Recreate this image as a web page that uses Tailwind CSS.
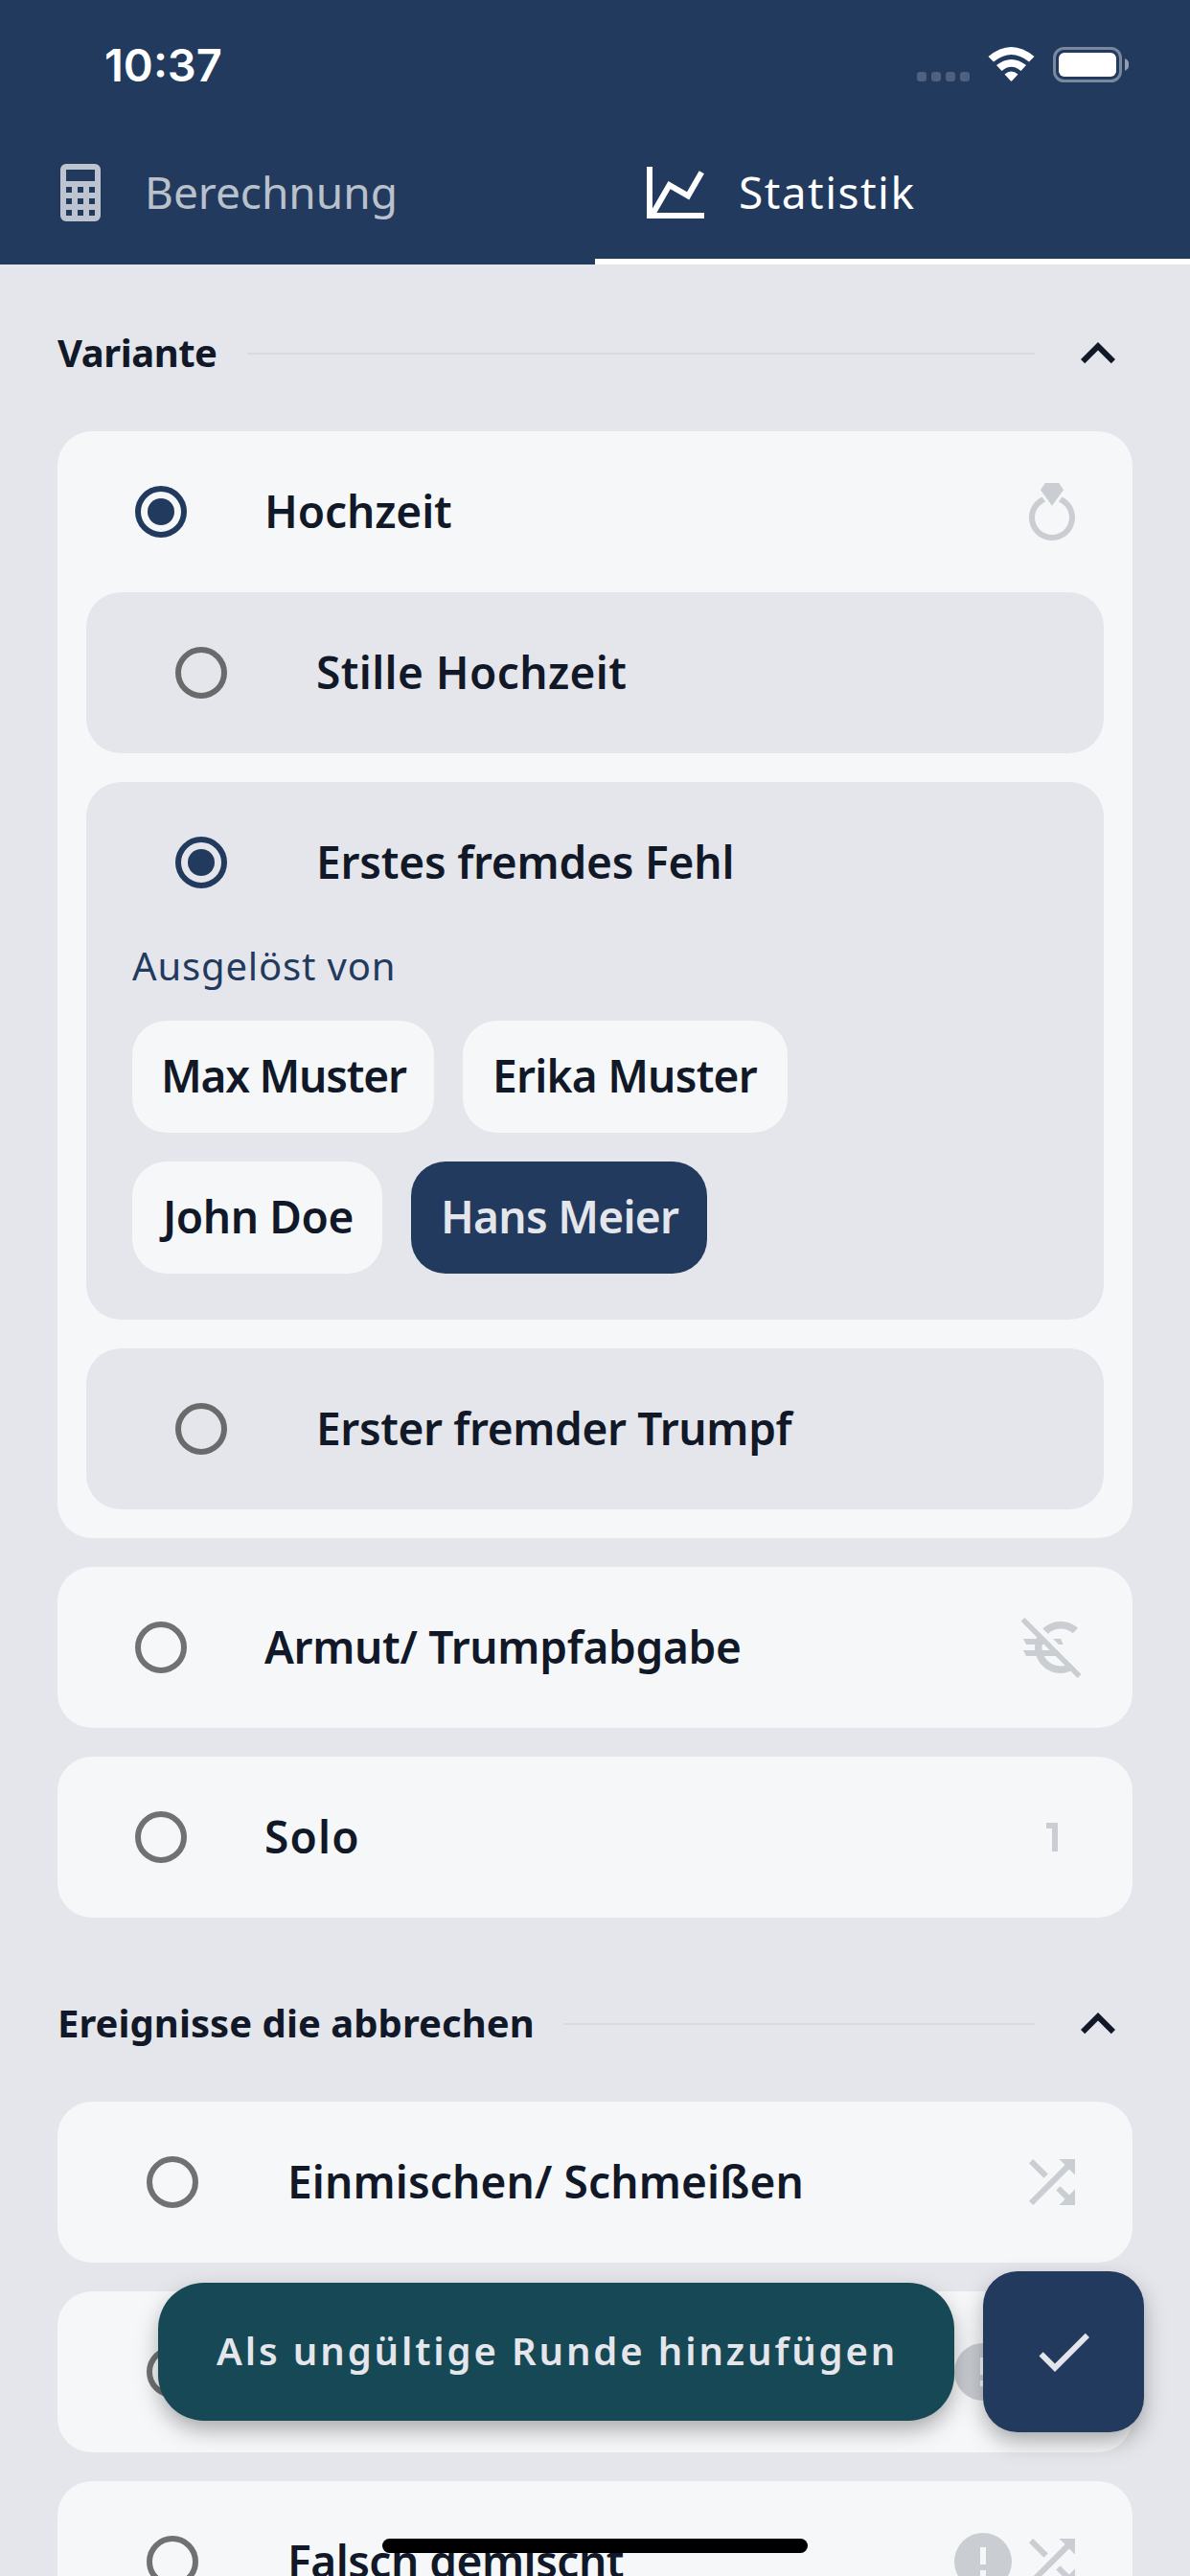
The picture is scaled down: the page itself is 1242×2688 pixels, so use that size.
<!DOCTYPE html>
<html lang="de">
<head>
<meta charset="utf-8">
<title>Statistik</title>
<script src="https://cdn.jsdelivr.net/npm/@tailwindcss/browser@4"></script>
</head>
<body class="bg-[#e5e6eb]">
<div class="relative w-[1242px] h-[2688px] overflow-hidden bg-[#e5e6eb] text-[#111827] whitespace-nowrap font-['Noto_Sans',sans-serif]">

  <header class="h-[276px] bg-[#223a5e] text-white flex flex-col">
    <!-- status bar -->
    <div class="h-[132px] flex items-center justify-between pl-[109px] pr-[64px] pt-[3px]">
      <span class="font-['Inter',sans-serif] font-semibold text-[47px] leading-none">10:37</span>
      <svg class="w-[221px] h-[37px]" viewBox="957 49 221 37">
        <g fill="#fff" fill-opacity=".2"><rect x="957" y="75" width="10" height="10" rx="3"/><rect x="972" y="75" width="10" height="10" rx="3"/><rect x="987" y="75" width="10" height="10" rx="3"/><rect x="1002" y="75" width="10" height="10" rx="3"/></g>
        <g fill="#fff">
          <path d="M1031.500 59Q1055.500 39 1079.500 59L1074 64.500Q1055.500 49.500 1037 64.500Z"/>
          <path d="M1040 68Q1055.500 56 1071 68L1065.500 74Q1055.500 65.500 1045.500 74Z"/>
          <path d="M1048.500 77.500Q1055.500 71.500 1062.500 77.500L1056.300 84.300Q1055.500 85.200 1054.700 84.300Z"/>
          <rect x="1105" y="55" width="60" height="25" rx="6"/>
        </g>
        <rect x="1100.500" y="50.500" width="69" height="34" rx="10" fill="none" stroke="#fff" stroke-opacity=".4" stroke-width="3"/>
        <path d="M1174 61a7 7 0 0 1 0 13z" fill="#fff" fill-opacity=".5"/>
      </svg>
    </div>
    <nav class="flex-1 grid grid-cols-2 text-[46px] leading-none">
      <div class="flex items-center pl-12 gap-[31px] pb-[6px] text-white/70">
        <svg class="size-[72px]" viewBox="0 0 24 24" fill="currentColor"><path d="M7 2H17A2 2 0 0 1 19 4V20A2 2 0 0 1 17 22H7A2 2 0 0 1 5 20V4A2 2 0 0 1 7 2M7 4V8H17V4H7M7 10V12H9V10H7M11 10V12H13V10H11M15 10V12H17V10H15M7 14V16H9V14H7M11 14V16H13V14H11M15 14V16H17V14H15M7 18V20H9V18H7M11 18V20H13V18H11M15 18V20H17V18H15Z"/></svg>
        <span class="pb-[2px]">Berechnung</span>
      </div>
      <div class="flex items-center pl-12 gap-[30px] border-b-[6px] border-white">
        <svg class="size-[72px]" viewBox="0 0 24 24" fill="currentColor"><path d="M16 11.780L20.240 4.450L21.970 5.450L16.740 14.500L10.230 10.750L5.460 19H22V21H2V3H4V17.540L9.500 8L16 11.780Z"/></svg>
        <span class="pb-[2px] tracking-[1.47px]">Statistik</span>
      </div>
    </nav>
  </header>

  <main class="px-[60px]">
    <div class="h-[174px] pt-[12px] flex items-center">
      <h2 class="font-bold text-[40px] leading-none pb-[3px] tracking-[-0.46px]">Variante</h2>
      <div class="flex-1 h-[2px] bg-[#d9dade] ml-[31px] mr-[30px]"></div>
      <svg class="size-[72px]" viewBox="0 0 24 24" fill="currentColor"><path d="M7.410 15.410L12 10.830L16.590 15.410L18 14L12 8L6 14L7.410 15.410Z"/></svg>
    </div>

    <div class="flex flex-col gap-[30px] font-semibold text-[46px] leading-none">
      <section class="rounded-[36px] bg-[#f6f7f9] pb-[30px]">
        <div class="h-[168px] flex items-center pl-[81px] pr-12">
          <span class="size-[54px] shrink-0 rounded-full border-[6px] border-[#223a5e] flex items-center justify-center"><i class="size-[28px] rounded-full bg-[#223a5e]"></i></span>
          <span class="ml-[81px] pb-[2px] tracking-[-0.1px]">Hochzeit</span>
          <svg class="size-[72px] ml-auto text-[#cacdd2]" viewBox="0 0 24 24" fill="currentColor"><path d="M12 9.900L8 4.400L9.600 2H14.400L16 4.400L12 9.900M15.500 6.800L14.300 8.500C16.500 9.400 18 11.500 18 14C18 17.300 15.300 20 12 20S6 17.300 6 14C6 11.500 7.600 9.400 9.700 8.500L8.500 6.800C5.800 8.100 4 10.800 4 14C4 18.400 7.600 22 12 22S20 18.400 20 14C20 10.800 18.200 8.100 15.500 6.800Z"/></svg>
        </div>
        <div class="mx-[30px] flex flex-col gap-[30px]">
          <div class="h-[168px] rounded-[36px] bg-[#e5e6eb] flex items-center pl-[93px]">
            <span class="size-[54px] shrink-0 rounded-full border-[6px] border-[#6a6a6d]"></span>
            <span class="ml-[93px] pb-[2px] tracking-[0.4px]">Stille Hochzeit</span>
          </div>
          <div class="h-[561px] rounded-[36px] bg-[#e5e6eb]">
            <div class="h-[168px] flex items-center pl-[93px]">
              <span class="size-[54px] shrink-0 rounded-full border-[6px] border-[#223a5e] flex items-center justify-center"><i class="size-[28px] rounded-full bg-[#223a5e]"></i></span>
              <span class="ml-[93px] pb-[2px] tracking-[-0.2px]">Erstes fremdes Fehl</span>
            </div>
            <div class="px-12 flex flex-col">
              <p class="h-[81px] text-[40px] leading-[48px] text-[#223a5e] font-normal tracking-[0.85px]">Ausgelöst von</p>
              <div class="flex gap-[30px]">
                <span class="h-[117px] w-[315px] rounded-[36px] bg-[#f6f7f9] flex items-center pl-[30px] pb-[3px] tracking-[-1.2px]">Max Muster</span>
                <span class="h-[117px] w-[339px] rounded-[36px] bg-[#f6f7f9] flex items-center pl-[31px] pb-[3px] tracking-[-0.74px]">Erika Muster</span>
              </div>
              <div class="flex gap-[30px] mt-[30px]">
                <span class="h-[117px] w-[261px] rounded-[36px] bg-[#f6f7f9] flex items-center pl-[32px] pb-[3px] tracking-[-0.4px]">John Doe</span>
                <span class="h-[117px] w-[309px] rounded-[36px] bg-[#223a5e] text-[#e5e6eb] flex items-center pl-[31px] pb-[3px] tracking-[-0.7px]">Hans Meier</span>
              </div>
            </div>
          </div>
          <div class="h-[168px] rounded-[36px] bg-[#e5e6eb] flex items-center pl-[93px]">
            <span class="size-[54px] shrink-0 rounded-full border-[6px] border-[#6a6a6d]"></span>
            <span class="ml-[93px] pb-[2px] tracking-[-0.36px]">Erster fremder Trumpf</span>
          </div>
        </div>
      </section>

      <section class="h-[168px] rounded-[36px] bg-[#f6f7f9] flex items-center pl-[81px] pr-12">
        <span class="size-[54px] shrink-0 rounded-full border-[6px] border-[#717173]"></span>
        <span class="ml-[81px] pb-[2px] tracking-[-0.32px]">Armut/ Trumpfabgabe</span>
        <svg class="size-[72px] ml-auto text-[#cacdd2]" viewBox="0 0 24 24" fill="currentColor">
          <clipPath id="gap"><path d="M-2 -2.650L26 25.350V30H-2ZM0.700 -2.600H26V22.700Z"/></clipPath>
          <path clip-path="url(#gap)" d="M15 18.500C12.490 18.500 10.320 17.080 9.240 15H15V13H8.580C8.530 12.670 8.500 12.340 8.500 12S8.530 11.330 8.580 11H15.900L15 9H9.240C10.320 6.920 12.500 5.500 15 5.500C16.610 5.500 18.090 6.090 19.230 7.070L21 5.300C19.410 3.870 17.300 3 15 3C11.080 3 7.760 5.510 6.520 9H2L3 11H6.060A8.300 8.300 0 0 0 6.060 13H2L3 15H6.520C7.760 18.490 11.080 21 15 21C17.310 21 19.410 20.130 21 18.700L19.220 16.930C18.090 17.910 16.620 18.500 15 18.500Z"/>
          <path d="M2.500 1.700L1.200 2.950L20.900 22.650L22.150 21.350Z"/>
        </svg>
      </section>

      <section class="h-[168px] rounded-[36px] bg-[#f6f7f9] flex items-center pl-[81px] pr-12">
        <span class="size-[54px] shrink-0 rounded-full border-[6px] border-[#717173]"></span>
        <span class="ml-[81px] pb-[2px] tracking-[1.2px]">Solo</span>
        <svg class="size-[72px] ml-auto text-[#cacdd2]" viewBox="0 0 24 24" fill="currentColor"><path d="M14 17H12V9H10V7H14V17Z"/></svg>
      </section>
    </div>

    <div class="h-[192px] pt-[30px] flex items-center">
      <h2 class="font-bold text-[40px] leading-none pb-[3px] tracking-[0.05px]">Ereignisse die abbrechen</h2>
      <div class="flex-1 h-[2px] bg-[#d9dade] ml-[30px] mr-[30px]"></div>
      <svg class="size-[72px]" viewBox="0 0 24 24" fill="currentColor"><path d="M7.410 15.410L12 10.830L16.590 15.410L18 14L12 8L6 14L7.410 15.410Z"/></svg>
    </div>

    <div class="flex flex-col gap-[30px] font-semibold text-[46px] leading-none">
      <section class="h-[168px] rounded-[36px] bg-[#f6f7f9] flex items-center pl-[93px] pr-12">
        <span class="size-[54px] shrink-0 rounded-full border-[6px] border-[#717173]"></span>
        <span class="ml-[93px] pb-[2px] tracking-[0.14px]">Einmischen/ Schmeißen</span>
        <svg class="size-[72px] ml-auto text-[#cacdd2]" viewBox="0 0 24 24" fill="currentColor"><path d="M10.590 9.170L5.410 4 4 5.410l5.170 5.170 1.420-1.410zM14.500 4l2.040 2.040L4 18.590 5.410 20 17.960 7.460 20 9.500V4h-5.500zm.33 9.410l-1.410 1.410 3.130 3.130L14.500 20H20v-5.500l-2.040 2.040-3.130-3.130z"/></svg>
      </section>
      <section class="h-[168px] rounded-[36px] bg-[#f6f7f9] flex items-center pl-[93px] pr-12">
        <span class="size-[54px] shrink-0 rounded-full border-[6px] border-[#717173]"></span>
        <svg class="size-[72px] ml-auto mr-[72px] text-[#cacdd2]" viewBox="0 0 24 24" fill="currentColor"><path d="M13 13H11V7H13M13 17H11V15H13M12 2A10 10 0 0 0 2 12A10 10 0 0 0 12 22A10 10 0 0 0 22 12A10 10 0 0 0 12 2Z"/></svg>
      </section>
      <section class="h-[168px] rounded-[36px] bg-[#f6f7f9] flex items-center pl-[93px] pr-12">
        <span class="size-[54px] shrink-0 rounded-full border-[6px] border-[#717173]"></span>
        <span class="ml-[93px] pb-[2px] tracking-[-0.5px]">Falsch gemischt</span>
        <svg class="size-[72px] ml-auto text-[#cacdd2]" viewBox="0 0 24 24" fill="currentColor"><path d="M13 13H11V7H13M13 17H11V15H13M12 2A10 10 0 0 0 2 12A10 10 0 0 0 12 22A10 10 0 0 0 22 12A10 10 0 0 0 12 2Z"/></svg>
        <svg class="size-[72px] text-[#cacdd2]" viewBox="0 0 24 24" fill="currentColor"><path d="M10.590 9.170L5.410 4 4 5.410l5.170 5.170 1.420-1.410zM14.500 4l2.040 2.040L4 18.590 5.410 20 17.960 7.460 20 9.500V4h-5.500zm.33 9.410l-1.410 1.410 3.130 3.130L14.500 20H20v-5.500l-2.040 2.040-3.130-3.130z"/></svg>
      </section>
    </div>
  </main>

  <!-- floating actions -->
  <div class="absolute right-[48px] bottom-[150px] flex items-center gap-[30px]">
    <button class="h-[144px] w-[831px] rounded-[48px] bg-[#164955] text-[#e5e6eb] font-semibold text-[40px] leading-none flex items-center pl-[61px] pb-[3px] tracking-[2.88px] shadow-[0_10px_24px_-2px_rgba(0,0,0,0.35)]">Als ungültige Runde hinzufügen</button>
    <button class="size-[168px] rounded-[36px] bg-[#223a5e] text-[#e5e6eb] flex items-center justify-center shadow-[0_10px_24px_-2px_rgba(0,0,0,0.35)]">
      <svg class="size-[72px]" viewBox="0 0 24 24" fill="currentColor"><path d="M21 7L9 19L3.500 13.500L4.910 12.090L9 16.170L19.590 5.590L21 7Z"/></svg>
    </button>
  </div>

  <div class="absolute left-[399px] top-[2649px] w-[444px] h-[15px] rounded-full bg-black"></div>
</div>
</body>
</html>
